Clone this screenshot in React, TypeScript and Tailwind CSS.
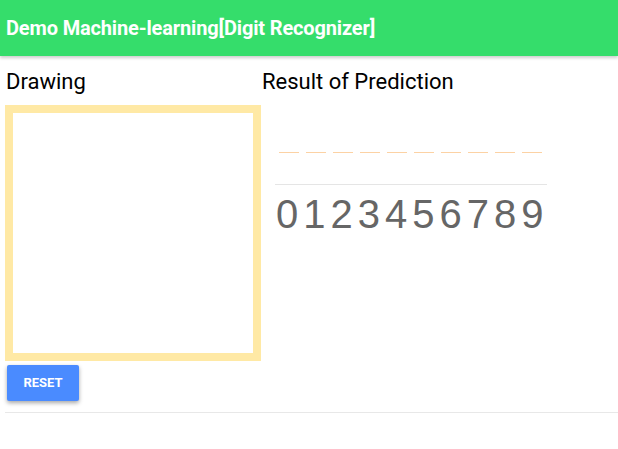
const digits = ["0", "1", "2", "3", "4", "5", "6", "7", "8", "9"];

export default function App() {
  return (
    <div className="min-h-screen bg-white font-['Roboto',sans-serif]">
      <header className="h-14 bg-[#35dd6b] shadow-[0_2px_3px_rgba(0,0,0,0.2)] flex items-center px-[6px]">
        <h1 className="text-white text-[20px] font-bold tracking-[-0.15px]">
          Demo Machine-learning[Digit Recognizer]
        </h1>
      </header>
      <main className="pl-[5px] pt-[11px]">
        <div className="flex">
          <section className="w-[256px]">
            <p className="text-[22px] leading-[30px] text-black pl-[1px]">Drawing</p>
            <div className="mt-2 w-[256px] h-[256px] border-8 border-[#ffe9a5] bg-white" />
            <button className="mt-1 ml-[2px] w-[72px] h-9 rounded-[2px] bg-[#4a8bff] text-white text-[13px] font-bold shadow-[0_2px_4px_rgba(0,0,0,0.35)]">
              RESET
            </button>
          </section>
          <section className="ml-[1px]">
            <p className="text-[22px] leading-[30px] text-black">Result of Prediction</p>
            <div className="ml-[13px] w-[272px]">
              <div className="mt-[55px] flex gap-[7px] pl-[4px]">
                {digits.map((d) => (
                  <span key={d} className="block w-5 border-t border-[#fcd2a4]" />
                ))}
              </div>
              <div className="mt-[31px] border-t border-[#e5e5e5]" />
              <p className="mt-[7px] pl-px text-[40px] leading-[44px] tracking-[5px] text-[#666666] font-['Liberation_Sans',Arial,sans-serif]">
                {digits.join("")}
              </p>
            </div>
          </section>
        </div>
        <div className="mt-[11px] border-t border-[#e8e8e8]" />
      </main>
    </div>
  );
}
